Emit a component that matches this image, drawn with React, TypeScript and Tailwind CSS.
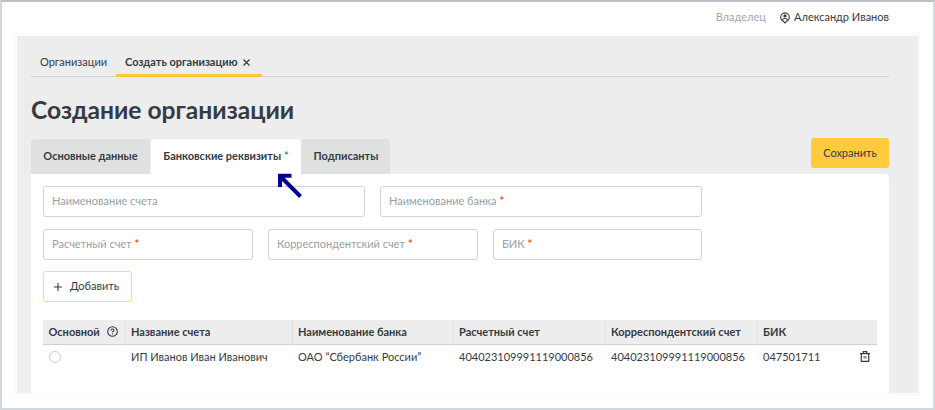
import { useState } from "react";

const tabs = [
  { id: "main", label: "Основные данные", width: "w-[119px]" },
  { id: "bank", label: "Банковские реквизиты", width: "w-[150px]", marked: true },
  { id: "signers", label: "Подписанты", width: "w-[89px]" },
];

const columns = [
  { label: "Основной", width: "w-[82px]" },
  { label: "Название счета", width: "w-[167px]" },
  { label: "Наименование банка", width: "w-[161px]" },
  { label: "Расчетный счет", width: "w-[152px]" },
  { label: "Корреспондентский счет", width: "w-[152px]" },
  { label: "БИК", width: "w-[120px]" },
];

function Field({ label, required, className }: { label: string; required?: boolean; className: string }) {
  return (
    <label className={`flex h-[31px] items-center rounded-[3px] border border-[#cdd4d9] bg-white px-2 text-[#979fa5] ${className}`}>
      <span>{label}</span>
      {required && <span className="ml-[3px] font-bold text-[#f4512c]">*</span>}
    </label>
  );
}

function UserIcon() {
  return (
    <svg className="h-[12px] w-[10px]" viewBox="0 0 10 12" fill="none" stroke="currentColor" strokeWidth="1.1">
      <path d="M3 9A4.3 4.3 0 1 1 7 9L5 11Z" />
      <circle cx="5" cy="3.9" r="1.1" fill="currentColor" />
      <path d="M2.4 8C2.9 6.8 3.8 6.5 5 6.5S7.1 6.8 7.6 8" />
    </svg>
  );
}

function TrashIcon() {
  return (
    <svg className="h-[11px] w-[10px]" viewBox="0 0 10 11" fill="none" stroke="currentColor" strokeWidth="1.2">
      <path d="M0 2.6H10M3.2 2.6V.6H6.8V2.6M1.3 2.6V10.3H8.7V2.6" />
      <path d="M4.1 5V7.6M5.9 5V7.6" strokeWidth=".9" />
    </svg>
  );
}

function HelpIcon() {
  return (
    <svg className="h-[11px] w-[11px]" viewBox="0 0 11 11" fill="none" stroke="currentColor" strokeWidth="1.1">
      <circle cx="5.5" cy="5.5" r="4.8" />
      <path d="M4 4.4C4 2.5 7 2.6 7 4.3C7 5.4 5.5 5.2 5.5 6.5M5.5 7.4V8.4" />
    </svg>
  );
}

export default function App() {
  const [active, setActive] = useState("bank");

  return (
    <div className="relative h-[410px] w-[935px] overflow-hidden border-2 border-t-[#bcc1c5] border-r-[#d3d8dc] border-b-[#d3d8dc] border-l-[#d3d8dc] bg-white font-['Lato',sans-serif] text-[11px] text-[#353b44]">
      <header className="flex h-[34px] items-center justify-end pr-[44px] pb-[3px]">
        <span className="text-[#a3a9ae]">Владелец</span>
        <span className="ml-[14px] flex items-center gap-1">
          <UserIcon />
          Александр Иванов
        </span>
      </header>

      <main className="mx-[15px] h-[357px] bg-[#ededed] pr-[29px] pl-[14px] outline outline-offset-1 outline-[#f8f8f8]">
        <nav className="flex h-[41px] items-end border-b border-[#cdd2d5]">
          <a className="flex h-[27px] items-center px-[9px]">Организации</a>
          <a className="-mb-px flex h-[28px] items-center border-b-[3px] border-[#ffc832] px-[9px] pt-px font-bold">
            Создать организацию
            <svg className="ml-[6px] h-[7px] w-[7px]" viewBox="0 0 7 7" stroke="currentColor" strokeWidth="1.2">
              <path d="M.5.5L6.5 6.5M6.5.5L.5 6.5" />
            </svg>
            <span className="w-[3px]" />
          </a>
        </nav>

        <h1 className="mt-[17px] h-[32px] text-[24.6px] leading-[32px] font-bold">Создание организации</h1>

        <div className="mt-[12px] flex h-[36px] items-start justify-between">
          <div className="flex h-[36px] pt-px">
            {tabs.map((tab) => (
              <button
                key={tab.id}
                onClick={() => setActive(tab.id)}
                className={`flex items-center justify-center rounded-t-[4px] font-bold first:mr-px last:pl-px ${tab.width} ${active === tab.id ? "bg-white" : "bg-[#dfe1e0]"}`}
              >
                {tab.label}
                {tab.marked && <span className="ml-[3px] text-[#20a567]">*</span>}
              </button>
            ))}
          </div>
          <button className="h-[30px] w-[78px] rounded-[3px] bg-[#ffca3c]">Сохранить</button>
        </div>

        <section className="h-[219px] rounded-tr-[4px] bg-white px-3 pt-3">
          <div className="flex gap-[15px]">
            <Field label="Наименование счета" className="w-[322px]" />
            <Field label="Наименование банка" required className="w-[322px]" />
          </div>
          <div className="mt-3 flex gap-[15px]">
            <Field label="Расчетный счет" required className="w-[210px]" />
            <Field label="Корреспондентский счет" required className="w-[210px]" />
            <Field label="БИК" required className="w-[209px]" />
          </div>
          <button className="mt-[11px] flex h-[31px] w-[89px] items-center rounded-[3px] border border-[#ffd978] pl-[10px]">
            <svg className="mr-[8px] h-[8px] w-[8px]" viewBox="0 0 8 8" stroke="currentColor" strokeWidth="1.1">
              <path d="M0 4H8M4 0V8" />
            </svg>
            Добавить
          </button>

          <table className="mt-[18px] w-[834px] table-fixed border-collapse text-left whitespace-nowrap">
            <thead>
              <tr className="h-[24px] border-b border-[#cfcfcf] bg-[#ededed]">
                {columns.map((column, i) => (
                  <th key={column.label} className={`border-r border-[#e1e2e3] p-0 pl-[5.5px] font-bold last:border-r-0 ${column.width}`}>
                    <span className="flex items-center justify-between pr-[7px]">
                      {column.label}
                      {i === 0 && <HelpIcon />}
                    </span>
                  </th>
                ))}
              </tr>
            </thead>
            <tbody>
              <tr className="h-[25px]">
                <td className="p-0 pl-[6px]">
                  <span className="block h-[12px] w-[12px] rounded-full border border-[#c7cdd1]" />
                </td>
                <td className="p-0 pl-[6px]">ИП Иванов Иван Иванович</td>
                <td className="p-0 pl-[6px]">ОАО “Сбербанк России”</td>
                <td className="p-0 pl-[6px]">404023109991119000856</td>
                <td className="p-0 pl-[6px]">404023109991119000856</td>
                <td className="p-0 pl-[6px]">
                  <span className="flex items-center justify-between pr-[7px]">
                    047501711
                    <TrashIcon />
                  </span>
                </td>
              </tr>
            </tbody>
          </table>
        </section>
      </main>

      <svg className="absolute top-[171px] left-[275px] h-[26px] w-[27px]" viewBox="0 0 27 26" fill="none" stroke="#00008f" strokeWidth="4">
        <path d="M23.5 23.5L3 3M3 14V2.8H14.5" />
      </svg>
    </div>
  );
}
